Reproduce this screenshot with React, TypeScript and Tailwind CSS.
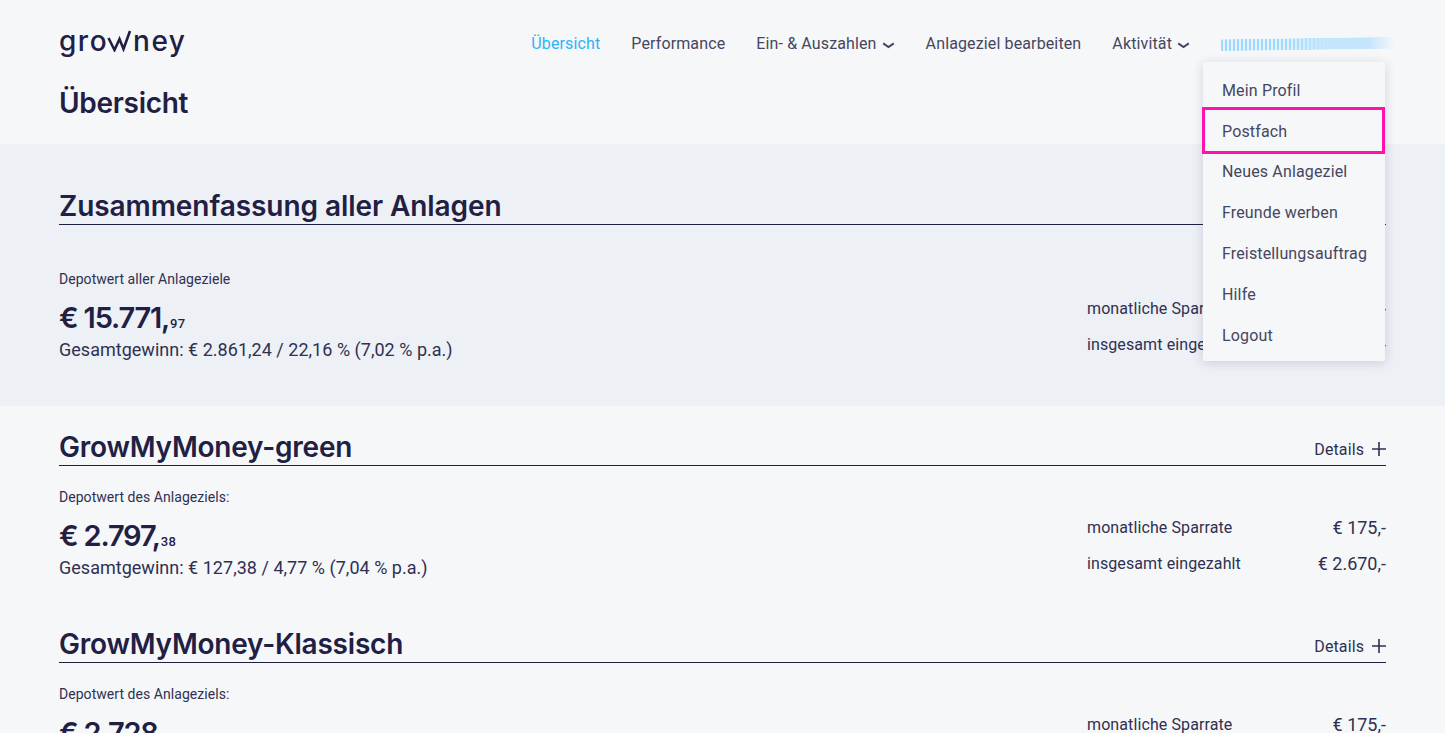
import React from "react";

const heading = "font-['Inter',sans-serif]";

const menuItems = [
  "Mein Profil",
  "Postfach",
  "Neues Anlageziel",
  "Freunde werben",
  "Freistellungsauftrag",
  "Hilfe",
  "Logout",
];

function Logo() {
  return (
    <div className={`${heading} flex items-baseline mt-[-4px] text-[28px] leading-none font-medium tracking-[1.5px] text-[#1f2044]`}>
      <span>gro</span>
      <svg width="26" height="22" viewBox="0 0 26 22" fill="none" className="self-end mb-[3px] ml-[-1px]">
        <path d="M1.5 8 L7.5 20 L12.5 9 L16.5 19 L23 1" stroke="#1f2044" strokeWidth="2.6" />
      </svg>
      <span>ney</span>
    </div>
  );
}

function Caret() {
  return (
    <svg width="13" height="7" viewBox="0 0 13 7" fill="none" className="mt-[3px]">
      <path d="M1.2 1.4 L6.5 5 L11.8 1.4" stroke="currentColor" strokeWidth="2" />
    </svg>
  );
}

function NavItem({ label, active, caret }: { label: string; active?: boolean; caret?: boolean }) {
  return (
    <div className={`flex items-center gap-[5px] text-[16px] tracking-[0.13px] ${active ? "text-[#2cb4f6]" : "text-[#45465f]"}`}>
      {label}
      {caret && <Caret />}
    </div>
  );
}

function Header() {
  return (
    <header className="h-[144px] px-[59px] pt-[26px]">
      <div className="flex items-center justify-between h-[34px]">
        <Logo />
        <nav className="flex items-center gap-[31px] mr-[-9px] mt-[2px]">
          <NavItem label="Übersicht" active />
          <NavItem label="Performance" />
          <NavItem label="Ein- & Auszahlen" caret />
          <NavItem label="Anlageziel bearbeiten" />
          <NavItem label="Aktivität" caret />
          <div className="w-[174px] h-[12px] -rotate-[0.8deg] blur-[0.7px] bg-[linear-gradient(90deg,transparent_35%,#c4e6fd_60%,#c4e6fd_88%),repeating-linear-gradient(90deg,#9fd8fb_0px,#9fd8fb_2px,#e6f4fd_2px,#e6f4fd_4px)] [mask-image:linear-gradient(90deg,#000_85%,transparent)]" />
        </nav>
      </div>
      <h1 className={`${heading} mt-[25px] text-[28px] leading-[36px] font-semibold tracking-[-0.3px] text-[#1f2044]`}>
        Übersicht
      </h1>
    </header>
  );
}

function SectionTitle({ title, details, wide }: { title: string; details?: boolean; wide?: boolean }) {
  return (
    <div className="flex items-end justify-between border-b border-[#1f2044] h-[40px]">
      <h2
        className={`${heading} mb-[-1px] text-[28px] leading-[38px] font-semibold text-[#1f2044] whitespace-nowrap ${
          wide ? "tracking-[-0.07px]" : "tracking-[-0.22px]"
        }`}
      >
        {title}
      </h2>
      {details && (
        <div className="flex items-center gap-[8px] mb-[5px] text-[16px] leading-[20px] tracking-[0.1px] text-[#2f3052]">
          Details
          <svg width="14" height="14" viewBox="0 0 14 14" className="mb-[2px]">
            <path d="M7 0V14M0 7H14" stroke="#2f3052" strokeWidth="1.6" />
          </svg>
        </div>
      )}
    </div>
  );
}

function Figures({ rate, total }: { rate: string; total: string }) {
  return (
    <div className="w-[299px] text-[16px] tracking-[0.1px] text-[#2f3052]">
      <div className="flex justify-between h-[36px] leading-[24px]">
        <span>monatliche Sparrate</span>
        <span className="text-[18px] tracking-normal">{rate}</span>
      </div>
      <div className="flex justify-between h-[36px] leading-[24px]">
        <span>insgesamt eingezahlt</span>
        <span className="text-[18px] tracking-normal">{total}</span>
      </div>
    </div>
  );
}

function Value({ label, euros, cents, gain }: { label: string; euros: string; cents: string; gain: string }) {
  return (
    <div className="text-[#2f3052]">
      <div className="text-[14px] leading-[20px] tracking-[0.05px]">{label}</div>
      <div className="mt-[11px] h-[36px] text-[#1f2044] leading-[36px] whitespace-nowrap">
        <span className={`${heading} text-[29px] font-semibold tracking-[-1.2px]`}>{euros}</span>
        <span className="ml-[1px] text-[13px] tracking-[0.3px] font-medium">{cents}</span>
      </div>
      <div className="text-[18px] leading-[26px] tracking-[0.02px] mt-[1px]">{gain}</div>
    </div>
  );
}

function Goal({ title, euros, cents, gain }: { title: string; euros: string; cents: string; gain: string }) {
  return (
    <section className="h-[197px] px-[59px] pt-[20px]">
      <SectionTitle title={title} details />
      <div className="flex justify-between mt-[21px]">
        <Value label="Depotwert des Anlageziels:" euros={euros} cents={cents} gain={gain} />
        <div className="mt-[29px]">
          <Figures rate="€ 175,-" total="€ 2.670,-" />
        </div>
      </div>
    </section>
  );
}

function UserMenu() {
  return (
    <div className="absolute left-[1203px] top-[62px] w-[182px] h-[299px] py-[7.8px] bg-[#f6f7f9] rounded-[2px] shadow-[0_2px_12px_rgba(31,32,68,0.16)]">
      {menuItems.map((item) => (
        <div key={item} className="h-[40.8px] pl-[19px] text-[16px] leading-[41px] tracking-[0.15px] text-[#45465f] whitespace-nowrap">
          {item}
        </div>
      ))}
    </div>
  );
}

export default function App() {
  return (
    <div className="relative h-[733px] overflow-hidden bg-[#f6f7f9] font-['Roboto',sans-serif]">
      <Header />
      <section className="h-[262px] bg-[#edf0f5] px-[59px] pt-[41px]">
        <SectionTitle title="Zusammenfassung aller Anlagen" wide />
        <div className="flex justify-between mt-[44px]">
          <Value
            label="Depotwert aller Anlageziele"
            euros="€ 15.771,"
            cents="97"
            gain="Gesamtgewinn: € 2.861,24 / 22,16 % (7,02 % p.a.)"
          />
          <div className="mt-[28px]">
            <Figures rate="€ 175,-" total="€ 2.670,-" />
          </div>
        </div>
      </section>
      <Goal
        title="GrowMyMoney-green"
        euros="€ 2.797,"
        cents="38"
        gain="Gesamtgewinn: € 127,38 / 4,77 % (7,04 % p.a.)"
      />
      <Goal
        title="GrowMyMoney-Klassisch"
        euros="€ 2.728,"
        cents="59"
        gain="Gesamtgewinn: € 58,59 / 2,19 % (7,01 % p.a.)"
      />
      <UserMenu />
      <div className="absolute left-[1202px] top-[107px] w-[183px] h-[47px] border-[3px] border-[#ff12ae]" />
    </div>
  );
}
